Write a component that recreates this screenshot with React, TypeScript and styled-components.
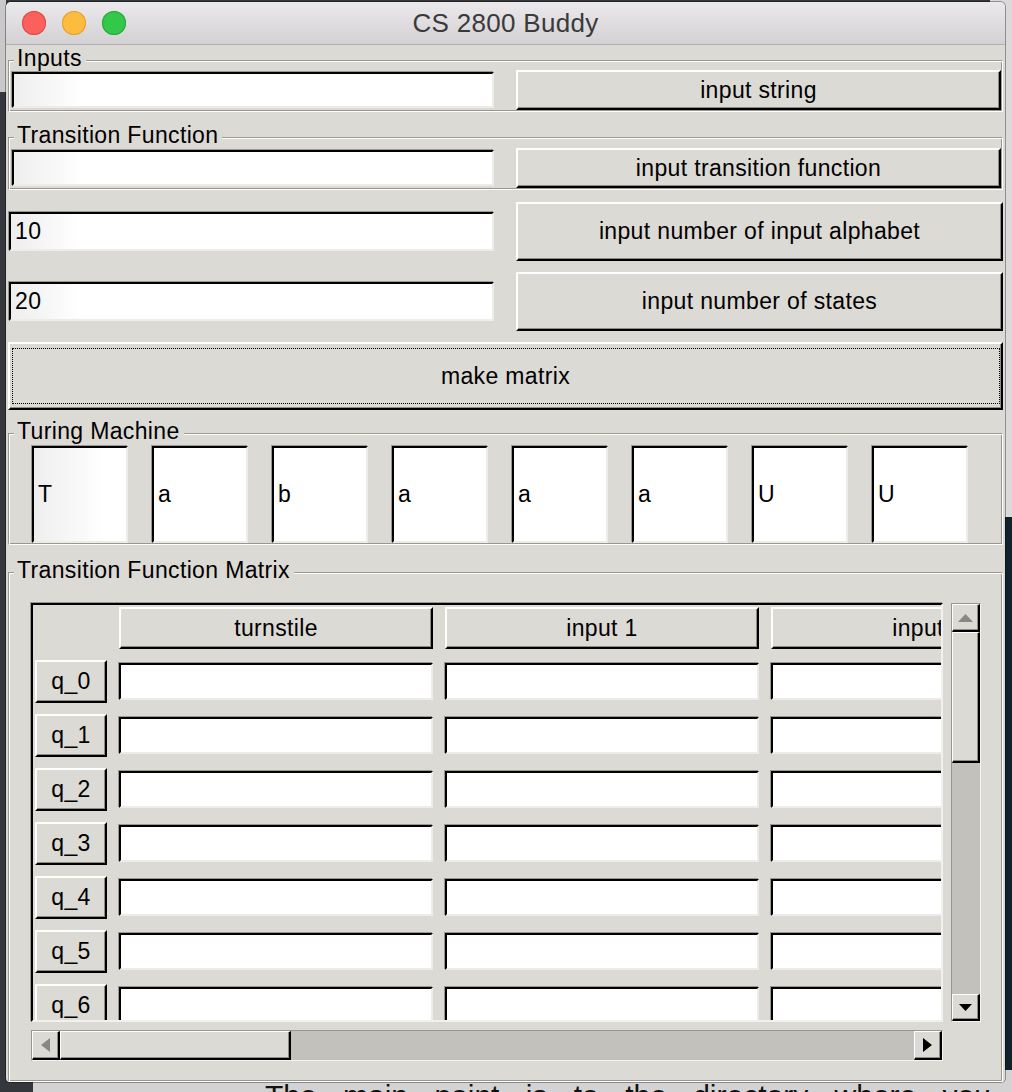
import React from "react";
import styled, { createGlobalStyle, css } from "styled-components";

const BG = "#dcdad5";
const SHADE = "#9b978f";
const LIGHT = "#eeece8";
const TROUGH = "#c3c1bc";

const GlobalStyle = createGlobalStyle`
  html, body { margin: 0; padding: 0; background: #33373b; }
  body { width: 1012px; height: 1092px; overflow: hidden; font-family: "Liberation Sans", Arial, sans-serif; }
  *, *::before, *::after { box-sizing: border-box; }
`;

const Desktop = styled.div`
  position: relative;
  width: 1012px;
  height: 1092px;
  overflow: hidden;
  background: #34383c;
`;

const BackPane = styled.div<{ $l: number; $t: number; $w: number; $h: number; $bg: string }>`
  position: absolute;
  left: ${(p) => p.$l}px;
  top: ${(p) => p.$t}px;
  width: ${(p) => p.$w}px;
  height: ${(p) => p.$h}px;
  background: ${(p) => p.$bg};
  overflow: hidden;
`;

const EditorLines = styled.div`
  display: flex;
  flex-direction: column;
  padding: 140px 0 0 5px;
  font-family: "DejaVu Sans Mono", monospace;
  font-size: 22px;
  line-height: 35px;
  font-weight: bold;
`;

const CodeLine = styled.span<{ $c: string }>`
  color: ${(p) => p.$c};
  white-space: nowrap;
`;

const DocText = styled.div`
  padding: 9px 0 0 232px;
  font-family: "Liberation Sans", Arial, sans-serif;
  font-size: 30px;
  line-height: 34px;
  color: #111;
  white-space: nowrap;
  word-spacing: 18px;
`;

const Window = styled.div`
  position: absolute;
  left: 6px;
  top: 2px;
  width: 999px;
  height: 1080px;
  display: flex;
  flex-direction: column;
  background: ${BG};
  border-radius: 5px 5px 4px 4px;
  overflow: hidden;
  box-shadow: 0 0 0 1px rgba(0, 0, 0, 0.35);
`;

const TitleBar = styled.div`
  flex: none;
  height: 43px;
  display: grid;
  grid-template-columns: 1fr auto 1fr;
  align-items: center;
  background: linear-gradient(#ebe9eb, #d3d1d3);
  border-bottom: 1px solid #b0aeb0;
`;

const Lights = styled.div`
  display: flex;
  gap: 16px;
  padding-left: 16px;
`;

const Light = styled.span<{ $c: string; $b: string }>`
  width: 24px;
  height: 24px;
  border-radius: 50%;
  background: ${(p) => p.$c};
  box-shadow: inset 0 0 0 1px ${(p) => p.$b};
`;

const Title = styled.div`
  font-family: "Liberation Sans", Arial, sans-serif;
  font-size: 26px;
  letter-spacing: 0.3px;
  color: #3a3a3a;
  padding-top: 1px;
`;

const Body = styled.div`
  flex: 1;
  min-height: 0;
  display: flex;
  flex-direction: column;
  padding: 0 2px;
  font-size: 23px;
  letter-spacing: 0.35px;
  color: #000;
`;

const Group = styled.section<{ $mt: number; $grow?: boolean }>`
  margin-top: ${(p) => p.$mt}px;
  border: 1px solid;
  border-color: ${SHADE} #fff #fff ${SHADE};
  box-shadow: inset 1px 1px 0 #fff, inset -1px -1px 0 ${SHADE};
  padding-bottom: 1px;
  display: flex;
  flex-direction: column;
  ${(p) =>
    p.$grow &&
    css`
      flex: 1;
      min-height: 0;
    `}
`;

const Legend = styled.div`
  align-self: flex-start;
  height: 26px;
  line-height: 26px;
  margin: -16px 0 0 5px;
  padding: 0 4px 0 3px;
  background: ${BG};
  white-space: nowrap;
`;

const PairRow = styled.div<{ $mt: number; $pl: number; $fw: number; $bw: number }>`
  display: grid;
  grid-template-columns: ${(p) => p.$fw}px ${(p) => p.$bw}px;
  column-gap: 22px;
  align-items: center;
  margin-top: ${(p) => p.$mt}px;
  padding-left: ${(p) => p.$pl}px;
`;

const Field = styled.div<{ $h: number; $shade?: boolean }>`
  height: ${(p) => p.$h}px;
  display: flex;
  align-items: center;
  padding-left: 4px;
  border: 2px solid;
  border-color: #000 ${LIGHT} ${LIGHT} #000;
  box-shadow: -1px -1px 0 ${SHADE};
  background: ${(p) => (p.$shade ? "linear-gradient(90deg, #eeeeee, #ffffff 70px)" : "#fff")};
  white-space: nowrap;
`;

const RaisedButton = styled.button<{ $h: number }>`
  height: ${(p) => p.$h}px;
  width: 100%;
  margin: 0;
  padding: 0;
  display: flex;
  align-items: center;
  justify-content: center;
  border: 2px solid;
  border-color: #fff #000 #000 #fff;
  border-radius: 0;
  box-shadow: inset -1px -1px 0 #8e8b84;
  background: ${BG};
  font: inherit;
  letter-spacing: inherit;
  color: #000;
  white-space: nowrap;
`;

const FocusButton = styled(RaisedButton)`
  position: relative;
  margin-top: 11px;
  &::after {
    content: "";
    position: absolute;
    inset: 4px 1px 4px 2px;
    border: 1px dotted #000;
  }
`;

const Tape = styled.div`
  display: flex;
  gap: 24px;
  padding-left: 23px;
  margin-top: 2px;
`;

const TapeCell = styled(Field)`
  width: 96px;
  flex: none;
`;

const MatrixArea = styled.div`
  display: grid;
  grid-template-columns: 912px 30px;
  grid-template-rows: 419px 31px;
  gap: 8px;
  margin: 20px 0 0 22px;
`;

const Sheet = styled.div`
  border: 2px solid;
  border-color: #000 #f2f1ee #f2f1ee #000;
  box-shadow: -1px -1px 0 ${SHADE};
  overflow: hidden;
`;

const SheetGrid = styled.div`
  display: grid;
  grid-template-columns: 72px repeat(3, 314px);
  grid-template-rows: 42px;
  grid-auto-rows: 43px;
  column-gap: 12px;
  row-gap: 11px;
  padding: 2px 0 0 2px;
  width: max-content;
`;

const HeaderButton = styled(RaisedButton)`
  overflow: hidden;
`;

const CellField = styled(Field)`
  align-self: center;
`;

const Trough = styled.div<{ $dir: "v" | "h" }>`
  display: flex;
  flex-direction: ${(p) => (p.$dir === "v" ? "column" : "row")};
  border: 1px solid;
  border-color: ${SHADE} #f4f3f0 #f4f3f0 ${SHADE};
  background: ${TROUGH};
`;

const ScrollPart = styled.div<{ $w?: number; $h?: number }>`
  flex: none;
  ${(p) => (p.$w ? `width: ${p.$w}px;` : "")}
  ${(p) => (p.$h ? `height: ${p.$h}px;` : "")}
  display: flex;
  align-items: center;
  justify-content: center;
  background: ${BG};
  border-style: solid;
  border-width: 1px 2px 2px 1px;
  border-color: #fff #000 #000 #fff;
  box-shadow: inset -1px -1px 0 #8e8b84;
`;

const Spacer = styled.div`
  flex: 1;
`;

const Corner = styled.div``;

type Dir = "up" | "down" | "left" | "right";
const arrowShapes: Record<Dir, { w: number; h: number; pts: string }> = {
  up: { w: 15, h: 8, pts: "0,8 7.5,0 15,8" },
  down: { w: 13, h: 7, pts: "0,0 13,0 6.5,7" },
  left: { w: 9, h: 14, pts: "9,0 9,14 0,7" },
  right: { w: 9, h: 14, pts: "0,0 0,14 9,7" },
};

function Arrow({ dir, color }: { dir: Dir; color: string }) {
  const s = arrowShapes[dir];
  return (
    <svg width={s.w} height={s.h} viewBox={`0 0 ${s.w} ${s.h}`}>
      <polygon points={s.pts} fill={color} />
    </svg>
  );
}

const tape = ["T", "a", "b", "a", "a", "a", "U", "U"];
const columns = ["turnstile", "input 1", "input 2"];
const states = ["q_0", "q_1", "q_2", "q_3", "q_4", "q_5", "q_6"];

const codeLines: { t: string; c: string }[] = [
  { t: "print", c: "#2aa198" },
  { t: "else", c: "#268bd2" },
  { t: "has", c: "#268bd2" },
  { t: "", c: "#268bd2" },
  { t: "if", c: "#b58900" },
  { t: "out", c: "#93a1a1" },
  { t: "out", c: "#93a1a1" },
  { t: "elif", c: "#268bd2" },
  { t: "has", c: "#268bd2" },
];

export default function App() {
  return (
    <Desktop>
      <GlobalStyle />
      <BackPane $l={0} $t={0} $w={6} $h={92} $bg="#c9c9c9" />
      <BackPane $l={990} $t={0} $w={30} $h={517} $bg="#dadada" />
      <BackPane $l={990} $t={517} $w={30} $h={575} $bg="#10222b">
        <EditorLines>
          {codeLines.map((l, i) => (
            <CodeLine key={i} $c={l.c}>
              {"\u00a0\u00a0\u00a0" + l.t}
            </CodeLine>
          ))}
        </EditorLines>
      </BackPane>
      <BackPane $l={33} $t={1070} $w={990} $h={30} $bg="#d3d3d3">
        <DocText>The main point is to the directory where you want it : i</DocText>
      </BackPane>

      <Window>
        <TitleBar>
          <Lights>
            <Light $c="#fc605c" $b="#df4844" />
            <Light $c="#fdbc40" $b="#dfa031" />
            <Light $c="#34c84a" $b="#25a73a" />
          </Lights>
          <Title>CS 2800 Buddy</Title>
          <div />
        </TitleBar>

        <Body>
          <Group $mt={15}>
            <Legend>Inputs</Legend>
            <PairRow $mt={-1} $pl={3} $fw={482} $bw={485}>
              <Field $h={36} $shade />
              <RaisedButton $h={40}>input string</RaisedButton>
            </PairRow>
          </Group>

          <Group $mt={25}>
            <Legend>Transition Function</Legend>
            <PairRow $mt={0} $pl={3} $fw={482} $bw={485}>
              <Field $h={36} $shade />
              <RaisedButton $h={40}>input transition function</RaisedButton>
            </PairRow>
          </Group>

          <PairRow $mt={12} $pl={1} $fw={485} $bw={487}>
            <Field $h={39} $shade>10</Field>
            <RaisedButton $h={59}>input number of input alphabet</RaisedButton>
          </PairRow>

          <PairRow $mt={11} $pl={1} $fw={485} $bw={487}>
            <Field $h={39} $shade>20</Field>
            <RaisedButton $h={59}>input number of states</RaisedButton>
          </PairRow>

          <FocusButton $h={68}>make matrix</FocusButton>

          <Group $mt={23}>
            <Legend>Turing Machine</Legend>
            <Tape>
              {tape.map((s, i) => (
                <TapeCell key={i} $h={97} $shade={i === 0}>
                  {s}
                </TapeCell>
              ))}
            </Tape>
          </Group>

          <Group $mt={27} $grow>
            <Legend>Transition Function Matrix</Legend>
            <MatrixArea>
              <Sheet>
                <SheetGrid>
                  <div />
                  {columns.map((c) => (
                    <HeaderButton key={c} $h={42}>
                      {c}
                    </HeaderButton>
                  ))}
                  {states.map((q) => (
                    <React.Fragment key={q}>
                      <RaisedButton $h={43}>{q}</RaisedButton>
                      {columns.map((c) => (
                        <CellField key={c} $h={37} />
                      ))}
                    </React.Fragment>
                  ))}
                </SheetGrid>
              </Sheet>

              <Trough $dir="v">
                <ScrollPart $h={28}>
                  <Arrow dir="up" color="#8a8884" />
                </ScrollPart>
                <ScrollPart $h={131} />
                <Spacer />
                <ScrollPart $h={27}>
                  <Arrow dir="down" color="#000" />
                </ScrollPart>
              </Trough>

              <Trough $dir="h">
                <ScrollPart $w={28}>
                  <Arrow dir="left" color="#8a8884" />
                </ScrollPart>
                <ScrollPart $w={231} />
                <Spacer />
                <ScrollPart $w={28}>
                  <Arrow dir="right" color="#000" />
                </ScrollPart>
              </Trough>

              <Corner />
            </MatrixArea>
          </Group>
        </Body>
      </Window>
    </Desktop>
  );
}
